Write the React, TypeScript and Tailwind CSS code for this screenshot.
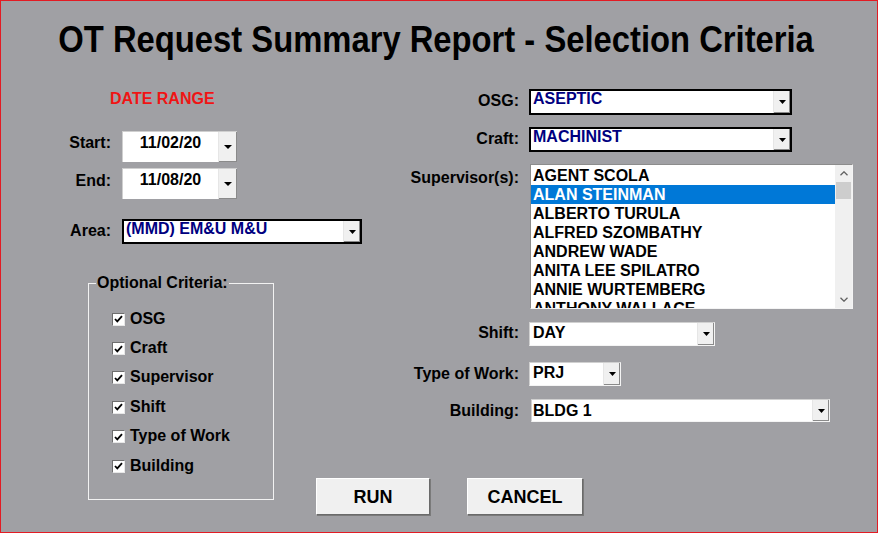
import React from "react";

const supervisors = [
  "AGENT SCOLA",
  "ALAN STEINMAN",
  "ALBERTO TURULA",
  "ALFRED SZOMBATHY",
  "ANDREW WADE",
  "ANITA LEE SPILATRO",
  "ANNIE WURTEMBERG",
  "ANTHONY WALLACE",
];

const optional = ["OSG", "Craft", "Supervisor", "Shift", "Type of Work", "Building"];

function Arrow({ big }: { big?: boolean }) {
  return big ? (
    <svg width="8" height="4" viewBox="0 0 8 4">
      <path d="M0 0h8L4 4z" fill="#000" />
    </svg>
  ) : (
    <svg width="7" height="4" viewBox="0 0 7 4">
      <path d="M0 0h7L3.5 4z" fill="#000" />
    </svg>
  );
}

function DropButton({ big }: { big?: boolean }) {
  return (
    <div
      className={
        big
          ? "flex h-full w-[19px] shrink-0 items-center justify-center border-l border-[#e6e6e6] bg-[#f0f0f0] shadow-[inset_-1px_-1px_0_#8a8a8a]"
          : "flex h-full w-[17px] shrink-0 items-center justify-center border-l border-[#e6e6e6] bg-[#f0f0f0] shadow-[inset_-1px_-1px_0_#8a8a8a]"
      }
    >
      <Arrow big={big} />
    </div>
  );
}

function DateBox({ value }: { value: string }) {
  return (
    <div className="flex h-[31px] w-[115px] shrink-0 border-t border-l border-[#cfcfcf] bg-white">
      <span className="flex-1 pt-[2px] text-center text-[16px] font-bold leading-[18px]">{value}</span>
      <DropButton big />
    </div>
  );
}

function Label({ children }: { children: React.ReactNode }) {
  return <span className="block text-[16px] font-bold leading-[18px] text-black">{children}</span>;
}

function Check() {
  return (
    <div className="flex h-[12px] w-[12px] shrink-0 items-center justify-center border-t border-l border-[#6e6e6e] bg-white shadow-[1px_1px_0_#e8e8e8]">
      <svg width="9" height="8" viewBox="0 0 9 8">
        <path d="M1 4l2.3 2.4L8 1.2" fill="none" stroke="#000" strokeWidth="1.8" />
      </svg>
    </div>
  );
}

function Chevron({ down }: { down?: boolean }) {
  return (
    <svg width="8" height="5" viewBox="0 0 8 5">
      <path
        d={down ? "M0.5 0.8L4 4.2L7.5 0.8" : "M0.5 4.2L4 0.8L7.5 4.2"}
        fill="none"
        stroke="#606060"
        strokeWidth="1.3"
      />
    </svg>
  );
}

export default function App() {
  return (
    <div className="h-[534px] w-[880px] bg-white font-['Liberation_Sans',Arial,sans-serif] leading-[18px]">
      <div className="h-[533px] w-[878px] overflow-hidden border border-[#e31b23] bg-[#a0a0a4]">
        <div className="h-[79px] pt-[21px] pr-[6px] text-center">
          <h1 className="inline-block scale-x-[0.91] text-[36px] font-bold leading-[36px] text-black">
            OT Request Summary Report - Selection Criteria
          </h1>
        </div>

        <div className="flex">
          {/* left column */}
          <div className="w-[299px] shrink-0">
            <div className="mt-[10px] pl-[109px] text-[16px] font-bold leading-[18px] text-[#f01414]">DATE RANGE</div>

            <div className="mt-[23px] flex items-start">
              <div className="w-[110px] shrink-0 pt-[3px] text-right">
                <Label>Start:</Label>
              </div>
              <div className="ml-[11px]">
                <DateBox value="11/02/20" />
              </div>
            </div>

            <div className="mt-[6px] flex items-start">
              <div className="w-[110px] shrink-0 pt-[4px] text-right">
                <Label>End:</Label>
              </div>
              <div className="ml-[11px]">
                <DateBox value="11/08/20" />
              </div>
            </div>

            <div className="mt-[20px] flex items-start">
              <div className="w-[110px] shrink-0 pt-[3px] text-right">
                <Label>Area:</Label>
              </div>
              <div className="ml-[11px] flex h-[25px] w-[240px] shrink-0 border-2 border-black bg-white">
                <span className="flex-1 pl-[2px] text-[16px] font-bold leading-[16px] text-[#000080]">(MMD) EM&amp;U M&amp;U</span>
                <DropButton />
              </div>
            </div>

            <div className="relative mt-[39px] ml-[87px] h-[217px] w-[186px] border border-[#f2f2f2]">
              <div className="absolute -top-[10px] left-[7px] bg-[#a0a0a4] px-[1px]">
                <Label>Optional Criteria:</Label>
              </div>
              <div className="flex flex-col pt-[20px] pl-[23px]">
                {optional.map((o) => (
                  <div key={o} className="flex h-[29.4px] items-center">
                    <Check />
                    <span className="ml-[6px]">
                      <Label>{o}</Label>
                    </span>
                  </div>
                ))}
              </div>
            </div>
          </div>

          {/* right column */}
          <div className="flex-1">
            <div className="mt-[9px] flex items-start gap-[10px]">
              <div className="w-[219px] shrink-0 pt-[3px] text-right">
                <Label>OSG:</Label>
              </div>
              <div className="flex h-[26px] w-[263px] shrink-0 border-2 border-black bg-white">
                <span className="flex-1 pl-[2px] text-[16px] font-bold leading-[16px] text-[#000080]">ASEPTIC</span>
                <DropButton />
              </div>
            </div>

            <div className="mt-[12px] flex items-start gap-[10px]">
              <div className="w-[219px] shrink-0 pt-[3px] text-right">
                <Label>Craft:</Label>
              </div>
              <div className="flex h-[25px] w-[263px] shrink-0 border-2 border-black bg-white">
                <span className="flex-1 pl-[2px] text-[16px] font-bold leading-[16px] text-[#000080]">MACHINIST</span>
                <DropButton />
              </div>
            </div>

            <div className="mt-[12px] flex items-start gap-[10px]">
              <div className="w-[219px] shrink-0 pt-[5px] text-right">
                <Label>Supervisor(s):</Label>
              </div>
              <div className="ml-[1px] flex h-[145px] w-[323px] shrink-0 overflow-hidden border border-t-[#8c8c8c] border-l-[#8c8c8c] border-r-[#f4f4f4] border-b-[#f4f4f4] bg-white">
                <div className="flex-1 pt-[1px]">
                  {supervisors.map((s, i) => (
                    <div
                      key={s}
                      className={
                        i === 1
                          ? "h-[19px] bg-[#0078d7] pl-[2px] text-[16px] font-bold leading-[19px] text-white"
                          : "h-[19px] pl-[2px] text-[16px] font-bold leading-[19px] text-black"
                      }
                    >
                      {s}
                    </div>
                  ))}
                </div>
                <div className="flex w-[17px] flex-col bg-[#f0f0f0]">
                  <div className="flex h-[17px] items-center justify-center">
                    <Chevron />
                  </div>
                  <div className="mx-[1px] h-[17px] bg-[#cdcdcd]" />
                  <div className="flex-1" />
                  <div className="flex h-[17px] items-center justify-center">
                    <Chevron down />
                  </div>
                </div>
              </div>
            </div>

            <div className="mt-[13px] flex items-start gap-[10px]">
              <div className="w-[219px] shrink-0 pt-[2px] text-right">
                <Label>Shift:</Label>
              </div>
              <div className="flex h-[24px] w-[186px] shrink-0 border border-t-[#d0d0d0] border-l-[#d0d0d0] border-r-[#f4f4f4] border-b-[#f4f4f4] bg-white">
                <span className="flex-1 pt-[2px] pl-[3px] text-[16px] font-bold leading-[16px] text-black">DAY</span>
                <DropButton />
              </div>
            </div>

            <div className="mt-[16px] flex items-start gap-[10px]">
              <div className="w-[219px] shrink-0 pt-[3px] text-right">
                <Label>Type of Work:</Label>
              </div>
              <div className="flex h-[24px] w-[92px] shrink-0 border border-t-[#d0d0d0] border-l-[#d0d0d0] border-r-[#f4f4f4] border-b-[#f4f4f4] bg-white">
                <span className="flex-1 pt-[2px] pl-[3px] text-[16px] font-bold leading-[16px] text-black">PRJ</span>
                <DropButton />
              </div>
            </div>

            <div className="mt-[13px] flex items-start gap-[10px]">
              <div className="w-[219px] shrink-0 pt-[3px] text-right">
                <Label>Building:</Label>
              </div>
              <div className="ml-[2px] flex h-[23px] w-[299px] shrink-0 border border-t-[#d0d0d0] border-l-[#d0d0d0] border-r-[#f4f4f4] border-b-[#f4f4f4] bg-white">
                <span className="flex-1 pt-[3px] pl-[1px] text-[16px] font-bold leading-[16px] text-black">BLDG 1</span>
                <DropButton />
              </div>
            </div>

            <div className="mt-[56px] ml-[16px] flex gap-[37px]">
              <button className="flex h-[37px] w-[114px] items-center justify-center border border-t-white border-l-white border-r-[#6a6a6a] border-b-[#6a6a6a] bg-[#f0f0f0] text-[18px] font-bold text-black shadow-[1px_1px_0_#7a7a7a]">
                RUN
              </button>
              <button className="flex h-[37px] w-[116px] items-center justify-center border border-t-white border-l-white border-r-[#6a6a6a] border-b-[#6a6a6a] bg-[#f0f0f0] text-[18px] font-bold text-black shadow-[1px_1px_0_#7a7a7a]">
                CANCEL
              </button>
            </div>
          </div>
        </div>
      </div>
    </div>
  );
}
